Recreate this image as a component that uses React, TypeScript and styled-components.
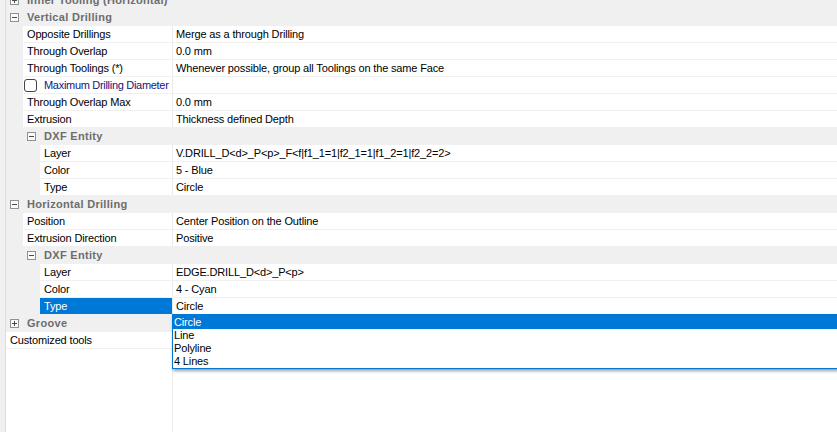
import styled, { createGlobalStyle } from 'styled-components'

const GlobalStyle = createGlobalStyle`
  html, body, #root {
    height: 100%;
    margin: 0;
  }
  body {
    font-family: 'Liberation Sans', Arial, sans-serif;
    font-size: 11px;
    letter-spacing: -0.15px;
    color: #000;
    background: #fff;
    overflow: hidden;
  }
`

type Row =
  | { kind: 'section'; label: string; level: number; open: boolean }
  | {
      kind: 'prop'
      label: string
      value?: string
      level: number
      checkbox?: boolean
      selected?: boolean
      options?: string[]
    }

const rows: Row[] = [
  { kind: 'section', label: 'Inner Tooling (Horizontal)', level: 0, open: false },
  { kind: 'section', label: 'Vertical Drilling', level: 0, open: true },
  { kind: 'prop', label: 'Opposite Drillings', value: 'Merge as a through Drilling', level: 1 },
  { kind: 'prop', label: 'Through Overlap', value: '0.0 mm', level: 1 },
  {
    kind: 'prop',
    label: 'Through Toolings (*)',
    value: 'Whenever possible, group all Toolings on the same Face',
    level: 1
  },
  { kind: 'prop', label: 'Maximum Drilling Diameter', level: 1, checkbox: true },
  { kind: 'prop', label: 'Through Overlap Max', value: '0.0 mm', level: 1 },
  { kind: 'prop', label: 'Extrusion', value: 'Thickness defined Depth', level: 1 },
  { kind: 'section', label: 'DXF Entity', level: 1, open: true },
  {
    kind: 'prop',
    label: 'Layer',
    value: 'V.DRILL_D<d>_P<p>_F<f|f1_1=1|f2_1=1|f1_2=1|f2_2=2>',
    level: 2
  },
  { kind: 'prop', label: 'Color', value: '5 - Blue', level: 2 },
  { kind: 'prop', label: 'Type', value: 'Circle', level: 2 },
  { kind: 'section', label: 'Horizontal Drilling', level: 0, open: true },
  { kind: 'prop', label: 'Position', value: 'Center Position on the Outline', level: 1 },
  { kind: 'prop', label: 'Extrusion Direction', value: 'Positive', level: 1 },
  { kind: 'section', label: 'DXF Entity', level: 1, open: true },
  { kind: 'prop', label: 'Layer', value: 'EDGE.DRILL_D<d>_P<p>', level: 2 },
  { kind: 'prop', label: 'Color', value: '4 - Cyan', level: 2 },
  {
    kind: 'prop',
    label: 'Type',
    value: 'Circle',
    level: 2,
    selected: true,
    options: ['Circle', 'Line', 'Polyline', '4 Lines']
  },
  { kind: 'section', label: 'Groove', level: 0, open: false },
  { kind: 'prop', label: 'Customized tools', value: '', level: 0 }
]

const INDENT = 17
const LABEL_COL = 167

const Expander = ({ open }: { open: boolean }) => (
  <ExpanderBox>
    <svg width="7" height="7" viewBox="0 0 7 7">
      <path d="M1 3.5h5" stroke="#4a4a4a" strokeWidth="1" />
      {!open && <path d="M3.5 1v5" stroke="#4a4a4a" strokeWidth="1" />}
    </svg>
  </ExpanderBox>
)

const Dropdown = ({ options, active }: { options: string[]; active: string }) => (
  <DropList>
    {options.map((o, i) => (
      <DropItem key={o} $active={o === active} $first={i === 0}>
        {o}
      </DropItem>
    ))}
  </DropList>
)

export default function App() {
  return (
    <>
      <GlobalStyle />
      <Page>
        <SideStrip />
        <Grid>
          {rows.map((r, i) =>
            r.kind === 'section' ? (
              <SectionRow key={i} $level={r.level}>
                <Expander open={r.open} />
                <SectionTitle>{r.label}</SectionTitle>
              </SectionRow>
            ) : (
              <PropRow key={i}>
                <Gutter $level={r.level} />
                <LabelCell $level={r.level} $selected={!!r.selected} $check={!!r.checkbox}>
                  {r.checkbox && <CheckBox />}
                  {r.label}
                </LabelCell>
                <ValueCell>
                  {r.value}
                  {r.options && <Dropdown options={r.options} active={r.value ?? ''} />}
                </ValueCell>
              </PropRow>
            )
          )}
          <Filler>
            <FillerLabel />
          </Filler>
        </Grid>
      </Page>
    </>
  )
}

const Page = styled.div`
  display: flex;
  height: 100%;
`

const SideStrip = styled.div`
  width: 5px;
  flex-shrink: 0;
  background: #f0f0f0;
  border-right: 1px solid #dcdcdc;
`

const Grid = styled.div`
  flex: 1;
  min-width: 0;
  display: flex;
  flex-direction: column;
  margin-top: -8px;
`

const SectionRow = styled.div<{ $level: number }>`
  height: 16px;
  flex-shrink: 0;
  display: flex;
  align-items: center;
  padding-left: ${p => 4 + p.$level * INDENT}px;
  background: #f0f0f0;
  border-bottom: 1px solid #f0f0f0;
`

const ExpanderBox = styled.div`
  width: 9px;
  height: 9px;
  box-sizing: border-box;
  border: 1px solid #919191;
  background: #fafafa;
  display: flex;
  align-items: center;
  justify-content: center;
  svg {
    display: block;
  }
`

const SectionTitle = styled.span`
  margin-left: 8px;
  font-weight: 700;
  color: #6d6d6d;
  letter-spacing: 0.3px;
  line-height: 16px;
  white-space: nowrap;
`

const PropRow = styled.div`
  height: 16px;
  flex-shrink: 0;
  display: flex;
  border-bottom: 1px solid #f0f0f0;
  line-height: 16px;
  white-space: nowrap;
`

const Gutter = styled.div<{ $level: number }>`
  width: ${p => p.$level * INDENT}px;
  flex-shrink: 0;
  background: #f0f0f0;
`

const LabelCell = styled.div<{ $level: number; $selected: boolean; $check: boolean }>`
  width: ${p => LABEL_COL - p.$level * INDENT}px;
  flex-shrink: 0;
  box-sizing: border-box;
  padding-left: ${p => (p.$check ? 1 : 4)}px;
  border-right: 1px solid #ebebeb;
  display: flex;
  align-items: center;
  letter-spacing: ${p => (p.$check ? '-0.3px' : 'inherit')};
  background: ${p => (p.$selected ? '#0078d7' : '#fff')};
  color: ${p => (p.$selected ? '#fff' : p.$check ? '#141482' : '#000')};
`

const CheckBox = styled.span`
  width: 13px;
  height: 13px;
  box-sizing: border-box;
  border: 1px solid #444;
  border-radius: 3px;
  background: #fff;
  margin-right: 7px;
  flex-shrink: 0;
`

const ValueCell = styled.div`
  flex: 1;
  position: relative;
  padding-left: 3px;
  background: #fff;
`

const DropList = styled.div`
  position: absolute;
  top: 16px;
  left: -1px;
  width: 700px;
  z-index: 2;
  background: #fff;
  border: 1px solid #0078d7;
  box-shadow: 1px 2px 3px rgba(0, 0, 0, 0.4);
`

const DropItem = styled.div<{ $active: boolean; $first: boolean }>`
  height: ${p => (p.$first ? 14 : 13)}px;
  line-height: ${p => (p.$first ? 14 : 13)}px;
  padding-left: 1px;
  background: ${p => (p.$active ? '#0078d7' : '#fff')};
  color: ${p => (p.$active ? '#fff' : '#000')};
`

const Filler = styled.div`
  flex: 1;
  display: flex;
  background: #fff;
`

const FillerLabel = styled.div`
  width: ${LABEL_COL}px;
  box-sizing: border-box;
  border-right: 1px solid #ebebeb;
`
